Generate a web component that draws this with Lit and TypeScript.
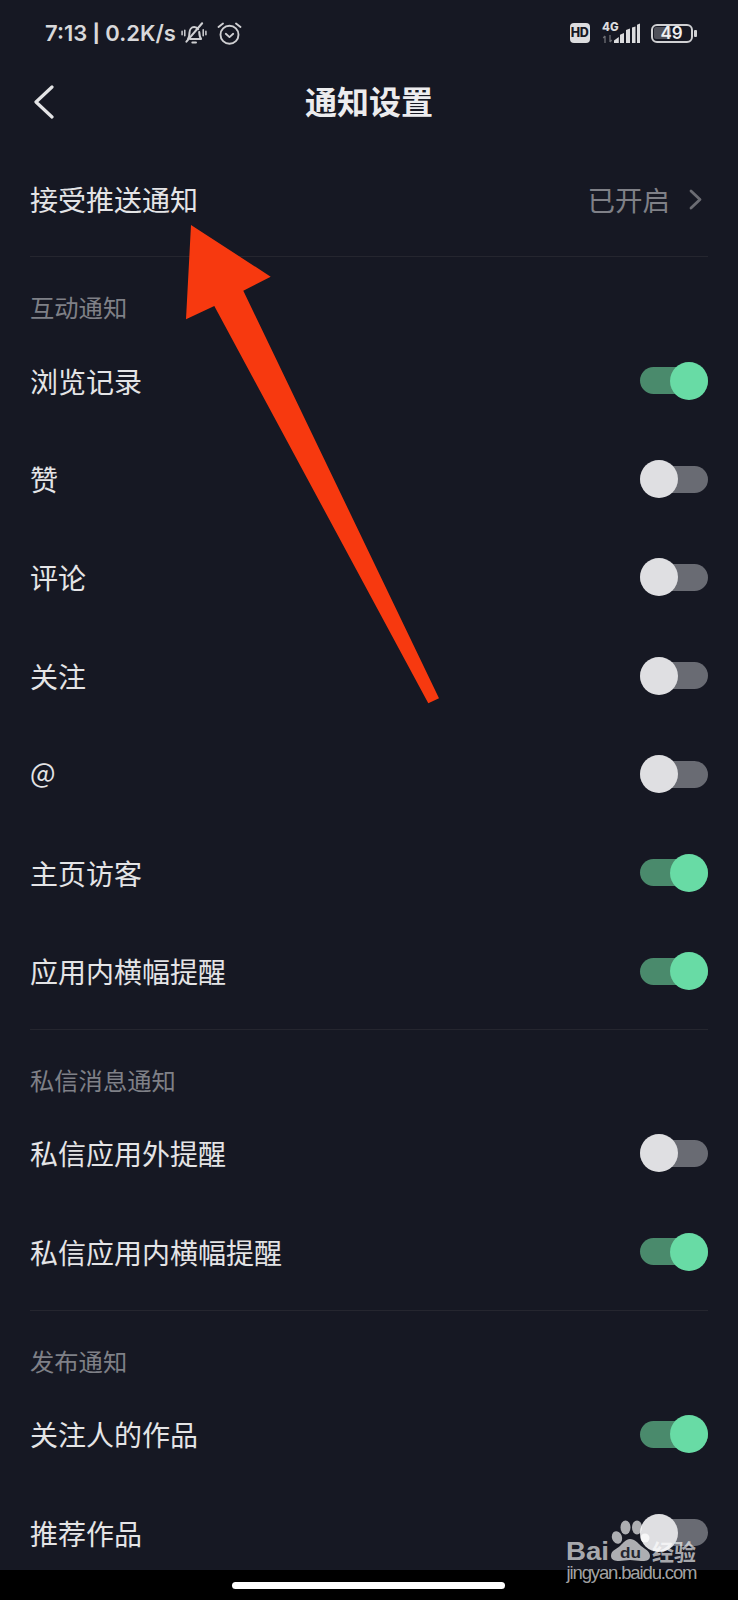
import { LitElement, css, html, svg } from "lit";
import { customElement, property } from "lit/decorators.js";

@customElement("app-toggle")
class AppToggle extends LitElement {
  static styles = css`
    :host {
      display: block;
      position: relative;
      width: 68px;
      height: 38px;
    }
    .track {
      position: absolute;
      left: 0;
      right: 0;
      top: 5.5px;
      height: 27px;
      border-radius: 14px;
      background: #696b73;
    }
    .knob {
      position: absolute;
      left: 0;
      top: 0;
      width: 38px;
      height: 38px;
      border-radius: 50%;
      background: #dfdfe2;
    }
    .on .track {
      background: #4a8a6c;
    }
    .on .knob {
      left: 30px;
      background: #68dba5;
    }
  `;

  @property({ type: Boolean }) on = false;

  render() {
    return html`<div class=${this.on ? "on" : ""}>
      <div class="track"></div>
      <div class="knob"></div>
    </div>`;
  }
}

const sections = [
  {
    title: "互动通知",
    rows: [
      ["浏览记录", true],
      ["赞", false],
      ["评论", false],
      ["关注", false],
      ["@", false],
      ["主页访客", true],
      ["应用内横幅提醒", true],
    ],
  },
  {
    title: "私信消息通知",
    rows: [
      ["私信应用外提醒", false],
      ["私信应用内横幅提醒", true],
    ],
  },
  {
    title: "发布通知",
    rows: [
      ["关注人的作品", true],
      ["推荐作品", false],
    ],
  },
] as { title: string; rows: [string, boolean][] }[];

@customElement("app-root")
class AppRoot extends LitElement {
  static styles = css`
    :host {
      display: block;
      position: relative;
      width: 738px;
      height: 1600px;
      overflow: hidden;
      background: #000;
      font-family: "Noto Sans CJK SC", sans-serif;
      color: #e4e4e6;
    }
    .screen {
      display: flex;
      flex-direction: column;
      height: 1600px;
    }
    .content {
      flex: 1;
      min-height: 0;
      overflow: hidden;
      background: #161823;
    }
    .status {
      display: flex;
      align-items: center;
      height: 66px;
      padding: 0 41px 0 45px;
      box-sizing: border-box;
      font-family: Inter, sans-serif;
      font-size: 22px;
      font-weight: 600;
      color: #d8d8da;
    }
    .status svg {
      display: block;
    }
    .pipe {
      font-size: 18px;
      font-weight: 800;
      vertical-align: 1px;
    }
    .bell {
      margin-left: 5px;
    }
    .alarm {
      margin-left: 10px;
    }
    .status-right {
      margin-left: auto;
      display: flex;
      align-items: center;
    }
    .hd {
      width: 20px;
      height: 20px;
      border-radius: 4px;
      background: #dcdcde;
      color: #161823;
      font-size: 12.5px;
      font-weight: 800;
      line-height: 20px;
      text-align: center;
      letter-spacing: -0.5px;
    }
    .net {
      margin-left: 12px;
    }
    .battery {
      position: relative;
      margin-left: 11px;
      width: 42px;
      height: 19px;
      box-sizing: border-box;
      border: 2.5px solid #d0d0d3;
      border-radius: 6px;
      padding: 1.5px;
    }
    .battery-fill {
      width: 49%;
      height: 100%;
      border-radius: 2px;
      background: #50515a;
    }
    .battery-num {
      position: absolute;
      inset: 0;
      text-align: center;
      font-size: 17px;
      font-weight: 600;
      line-height: 14px;
      color: #f0f0f0;
    }
    .nub {
      width: 3px;
      height: 7px;
      margin-left: 1.5px;
      border-radius: 1px;
      background: #d0d0d3;
    }
    .nav {
      display: grid;
      grid-template-columns: 1fr auto 1fr;
      align-items: center;
      height: 72px;
      padding-left: 34px;
    }
    .nav h1 {
      margin: 0 34px 4px 0;
      font-size: 32px;
      font-weight: 700;
      line-height: 68px;
      color: #ececee;
    }
    .nav svg {
      display: block;
    }
    .push {
      display: flex;
      align-items: center;
      justify-content: space-between;
      height: 118px;
      padding: 0 36px 0 30px;
      box-sizing: border-box;
      font-size: 28px;
    }
    .push-inner {
      display: flex;
      align-items: center;
      gap: 19px;
      color: #7f8087;
      font-size: 27.5px;
    }
    .push-label,
    .push-inner {
      position: relative;
      top: 2px;
    }
    .push-inner svg {
      display: block;
    }
    .section {
      margin: 0 30px;
    }
    .section + .section,
    .first-line {
      border-top: 1px solid #25262f;
    }
    .label {
      height: 74.5px;
      padding-top: 27px;
      box-sizing: border-box;
      font-size: 24.3px;
      line-height: 46px;
      color: #7f8087;
    }
    .gap {
      height: 8.5px;
    }
    .row {
      display: flex;
      align-items: center;
      justify-content: space-between;
      height: 98.4px;
      font-size: 28px;
    }
    .row span {
      position: relative;
    }
    .row span.at {
      top: -3px;
      font-size: 27px;
    }
    .home-bar {
      flex: none;
      display: flex;
      align-items: center;
      height: 30px;
      padding: 0 0 0 232px;
      background: #000;
    }
    .pill {
      width: 273px;
      height: 7px;
      border-radius: 4px;
      background: #fff;
    }
    .overlay {
      position: absolute;
      left: 0;
      top: 0;
      pointer-events: none;
    }
    .overlay text {
      font-family: "Liberation Sans", sans-serif;
    }
  `;

  bellIcon() {
    return html`<svg class="bell" width="26" height="26" viewBox="0 0 24 24" fill="none" stroke="#cfcfd2" stroke-width="1.9" stroke-linecap="round" stroke-linejoin="round">
      <path d="M6.500 17.500c1-1.500 1.300-3 1.300-5.500 0-3 1.800-5.500 4.400-5.500 1.500 0 2.800.7 3.600 1.900" />
      <path d="M16.800 11c.2 3 .5 5 1.700 6.500H8.500" />
      <path d="M5 20 19.500 3" />
      <path d="M10.500 20.800h3.300" />
      <path d="M3.500 9.500v5M1 10.500v3M20.500 9v5.500M23 10.500v3" stroke-width="1.400" />
    </svg>`;
  }

  alarmIcon() {
    return html`<svg class="alarm" width="25" height="23" viewBox="0 0 25 23" fill="none" stroke="#cfcfd2" stroke-width="1.900" stroke-linecap="round" stroke-linejoin="round">
      <circle cx="12.500" cy="12.800" r="9" />
      <path d="M8.800 11.800l3.700 3.300 3.700-3.300" />
      <path d="M1.500 5 6 1.500M23.500 5 19 1.500" />
    </svg>`;
  }

  netIcon() {
    return html`<svg class="net" width="38" height="23" viewBox="0 0 38 23" style="overflow:visible">
      <text x="0" y="8.500" font-family="Inter, sans-serif" font-size="11.500" font-weight="800" fill="#dcdcde">4G</text>
      <path d="M3 21v-7M1.300 16 3 14M8 13v7M8 20l1.700-2" stroke="#6d6e74" stroke-width="1.300" fill="none" />
      <path d="M12 21v-2.500L16.800 15v6zM18 21v-8.200l4-1.800v10zM24 21V8l4-1.500V21zM30 21V5.500l3.500-1V21zM35 21V2.800L38 1.500V21z" fill="#dcdcde" />
    </svg>`;
  }

  overlay() {
    return svg`
      <polygon fill="#f7390f" points="191,225 270.700,276.700 243.300,290.700 439,698.300 428.300,703.300 214.300,306 186,319.300" />
      <g fill="#fff" fill-opacity="0.65">
        <text x="566" y="1560" font-size="26" font-weight="700" textLength="43" lengthAdjust="spacingAndGlyphs">Bai</text>
        <ellipse cx="617" cy="1537.500" rx="5" ry="6.500" transform="rotate(-20 617 1537.500)" />
        <ellipse cx="625.500" cy="1527.500" rx="5" ry="7" />
        <ellipse cx="637" cy="1527.500" rx="5" ry="7" />
        <path d="M630 1539c5 0 8 4 11 7 4 3 9 5 9 10 0 5-5 5-9 5-4 0-7-1-11-1s-7 1-11 1c-4 0-8-1-8-5 0-6 6-7 9-10 3-3 6-7 10-7z" />
        <text x="652" y="1560" font-size="22" font-weight="700" style="font-family:'Noto Sans CJK SC',sans-serif">经验</text>
        <text x="566.500" y="1579" font-size="18.500" textLength="131" lengthAdjust="spacing">jingyan.baidu.com</text>
      </g>
      <circle cx="645" cy="1538" r="4.500" fill="#fff" fill-opacity="0.75" />
      <text x="620" y="1558" font-size="15" font-weight="700" fill="#24262f" textLength="21" lengthAdjust="spacingAndGlyphs">du</text>
    `;
  }

  render() {
    return html`<div class="screen">
        <div class="content">
          <div class="status">
            <span>7:13 <span class="pipe">|</span> 0.2K/s</span>
            ${this.bellIcon()} ${this.alarmIcon()}
            <div class="status-right">
              <div class="hd">HD</div>
              ${this.netIcon()}
              <div class="battery">
                <div class="battery-fill"></div>
                <div class="battery-num">49</div>
              </div>
              <div class="nub"></div>
            </div>
          </div>
          <div class="nav">
            <svg width="20" height="34" viewBox="0 0 20 34" fill="none" stroke="#e4e4e6" stroke-width="3.200" stroke-linecap="round" stroke-linejoin="round">
              <path d="M18 2 2 17l16 15" />
            </svg>
            <h1>通知设置</h1>
            <span></span>
          </div>
          <div class="push">
            <span class="push-label">接受推送通知</span>
            <div class="push-inner">
              <span>已开启</span>
              <svg width="13" height="21" viewBox="0 0 13 21" fill="none" stroke="#6b6c73" stroke-width="2.800" stroke-linecap="round" stroke-linejoin="round">
                <path d="M2 2l9 8.500L2 19" />
              </svg>
            </div>
          </div>
          ${sections.map(
            (s, i) => html`<div class="section ${i === 0 ? "first-line" : ""}">
              <div class="label">${s.title}</div>
              ${s.rows.map(
                ([name, on]) => html`<div class="row">
                  <span class=${name === "@" ? "at" : ""}>${name}</span>
                  <app-toggle ?on=${on}></app-toggle>
                </div>`
              )}
              <div class="gap"></div>
            </div>`
          )}
        </div>
        <div class="home-bar"><div class="pill"></div></div>
      </div>
      <svg class="overlay" width="738" height="1600" viewBox="0 0 738 1600">${this.overlay()}</svg>`;
  }
}
